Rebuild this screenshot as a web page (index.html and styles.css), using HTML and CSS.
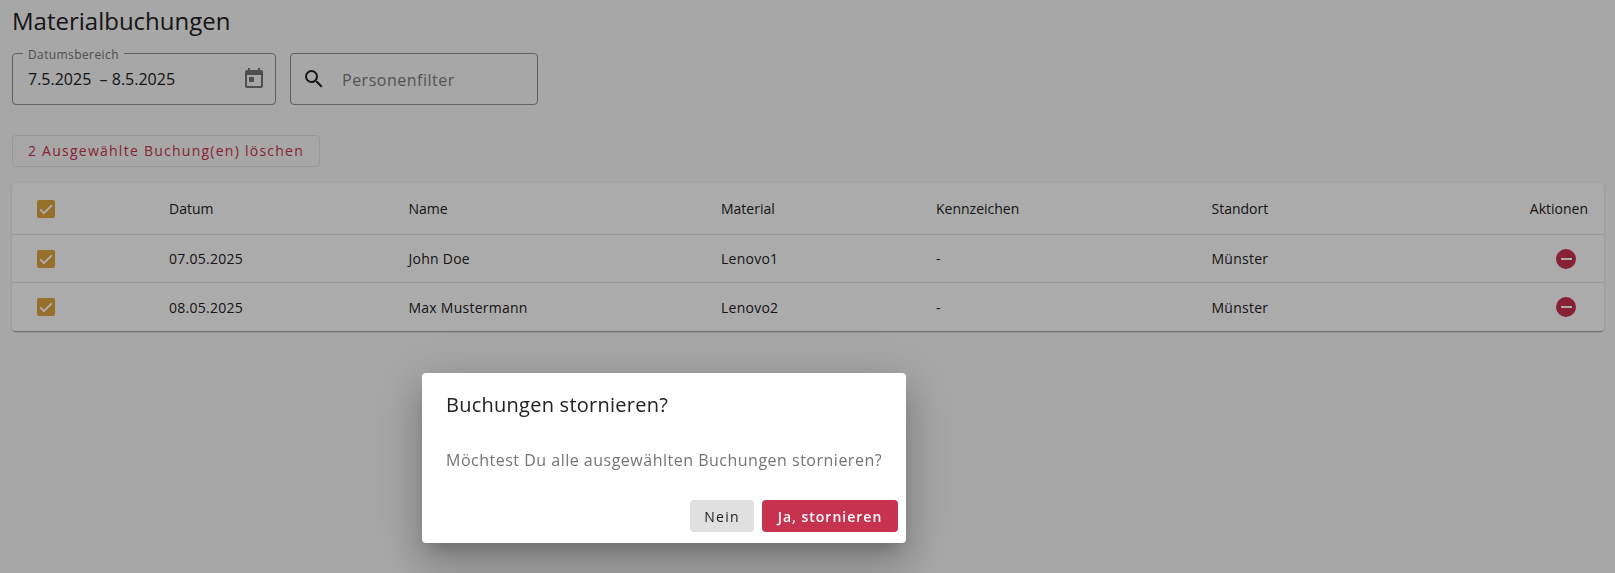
FILE: index.html
```html
<!DOCTYPE html>
<html lang="de">
<head>
<meta charset="utf-8">
<title>Materialbuchungen</title>
<link rel="stylesheet" href="styles.css">
</head>
<body>
<main class="page">
  <h1 class="title">Materialbuchungen</h1>
  <div class="filters">
    <div class="field field-date">
      <span class="field-label">Datumsbereich</span>
      <span class="date-value">7.5.2025 &nbsp;– 8.5.2025</span>
      <svg class="cal-icon" viewBox="0 0 24 24"><path d="M19 3h-1V1h-2v2H8V1H6v2H5c-1.1 0-2 .9-2 2v14c0 1.1.9 2 2 2h14c1.1 0 2-.9 2-2V5c0-1.1-.9-2-2-2zm0 16H5V8h14v11z M7 10h5v5H7z" /></svg>
    </div>
    <div class="field field-search">
      <svg class="search-icon" viewBox="0 0 24 24"><path d="M15.5 14h-.79l-.28-.27A6.471 6.471 0 0 0 16 9.5 6.5 6.5 0 1 0 9.5 16c1.61 0 3.09-.59 4.23-1.57l.27.28v.79l5 4.99L20.49 19l-4.99-5zm-6 0C7.01 14 5 11.99 5 9.5S7.01 5 9.5 5 14 7.01 14 9.5 11.99 14 9.5 14z"/></svg>
      <span class="placeholder">Personenfilter</span>
    </div>
  </div>
  <button class="delete-btn">2 Ausgewählte Buchung(en) löschen</button>
  <div class="card">
    <table class="table">
      <colgroup>
        <col class="c-check"><col class="c-date"><col class="c-name"><col class="c-mat"><col class="c-plate"><col class="c-loc"><col class="c-act">
      </colgroup>
      <thead>
        <tr>
          <th class="cell-check"><span class="check"><svg viewBox="0 0 24 24"><path d="M4.2 12.6l5 5L19.8 7"/></svg></span></th>
          <th>Datum</th><th>Name</th><th>Material</th><th>Kennzeichen</th><th>Standort</th><th class="cell-act">Aktionen</th>
        </tr>
      </thead>
      <tbody>
        <tr>
          <td class="cell-check"><span class="check"><svg viewBox="0 0 24 24"><path d="M4.2 12.6l5 5L19.8 7"/></svg></span></td>
          <td>07.05.2025</td><td>John Doe</td><td>Lenovo1</td><td>-</td><td>Münster</td>
          <td class="cell-act"><span class="remove"></span></td>
        </tr>
        <tr>
          <td class="cell-check"><span class="check"><svg viewBox="0 0 24 24"><path d="M4.2 12.6l5 5L19.8 7"/></svg></span></td>
          <td>08.05.2025</td><td>Max Mustermann</td><td>Lenovo2</td><td>-</td><td>Münster</td>
          <td class="cell-act"><span class="remove"></span></td>
        </tr>
      </tbody>
    </table>
  </div>
</main>
<div class="scrim"></div>
<section class="dialog">
  <h2 class="dialog-title">Buchungen stornieren?</h2>
  <p class="dialog-text">Möchtest Du alle ausgewählten Buchungen stornieren?</p>
  <div class="dialog-actions">
    <button class="btn btn-no">Nein</button>
    <button class="btn btn-yes">Ja, stornieren</button>
  </div>
</section>
</body>
</html>
```
FILE: styles.css
```css
* { box-sizing: border-box; }
html, body { margin: 0; height: 100%; }
body {
  background: #f6f6f6;
  font-family: "Open Sans", "Liberation Sans", sans-serif;
  color: #212121;
  overflow: hidden;
}
.page { padding: 4px 11px 0 12px; }
.title {
  margin: 0 0 15px;
  font-size: 24px;
  font-weight: 400;
  line-height: 34px;
  letter-spacing: 0;
}
.filters { display: flex; gap: 14px; }
.field {
  position: relative;
  display: flex;
  align-items: center;
  height: 52px;
  border: 1px solid #8f8f8f;
  border-radius: 4px;
}
.field-date { width: 264px; padding: 0 9px 0 15px; justify-content: space-between; }
.field-search { width: 248px; padding-left: 11px; }
.field-label {
  position: absolute;
  top: -6px;
  left: 10px;
  padding: 0 5px;
  background: #f6f6f6;
  color: #757575;
  font-size: 12px;
  line-height: 14px;
  letter-spacing: .4px;
}
.date-value { font-size: 16px; letter-spacing: 0; }
.cal-icon { width: 24px; height: 24px; fill: #757575; }
.search-icon { width: 24px; height: 24px; fill: #212121; flex: none; }
.placeholder { margin-top: 2px; margin-left: 16px; font-size: 16px; letter-spacing: .5px; color: #7b7b7b; }
.delete-btn {
  display: block;
  margin: 30px 0 16px;
  width: 308px;
  height: 32px;
  padding: 0 0 2px;
  background: transparent;
  border: 1px solid #e0e0e0;
  border-radius: 4px;
  font: 500 14px "Open Sans", sans-serif;
  letter-spacing: 1.25px;
  color: #c7324f;
}
.card {
  background: #fdfdfd;
  border-radius: 4px;
  box-shadow: 0 2px 1px -1px rgba(0,0,0,.2), 0 1px 1px rgba(0,0,0,.14), 0 1px 3px rgba(0,0,0,.12);
}
.table { width: 100%; border-collapse: separate; border-spacing: 0; table-layout: fixed; font-size: 14px; letter-spacing: .25px; }
.c-check { width: 157px; }
.c-date { width: 239.5px; }
.c-name { width: 312.5px; }
.c-mat { width: 215px; }
.c-plate { width: 275.5px; }
.c-loc { width: 280px; }
th, td { padding: 0; text-align: left; font-weight: 400; vertical-align: middle; border-bottom: 1px solid #e0e0e0; }
th { letter-spacing: 0; height: 52px; }
td { height: 48px; }
tbody tr:last-child td { border-bottom: 0; }
th.cell-check, td.cell-check { padding-left: 25px; }
th.cell-act, td.cell-act { text-align: right; padding-right: 16px; }
.check {
  display: block;
  width: 18px;
  height: 18px;
  background: #dea43e;
  border-radius: 2px;
}
.check svg { display: block; width: 18px; height: 18px; fill: none; stroke: #fff; stroke-width: 2.4; }
.remove {
  display: block;
  position: relative;
  width: 20px;
  height: 20px;
  margin: 0 12px 0 auto;
  border-radius: 50%;
  background: #c7324f;
}
.remove::after {
  content: "";
  position: absolute;
  left: 4.5px;
  right: 4.5px;
  top: 9px;
  height: 2px;
  background: #fff;
}
.scrim { position: fixed; inset: 0; background: rgba(0,0,0,.32); }
.dialog {
  position: absolute;
  left: 422px;
  top: 373px;
  width: 484px;
  height: 170px;
  padding: 0 8px;
  background: #fff;
  border-radius: 4px;
  box-shadow: 0 11px 15px -7px rgba(0,0,0,.2), 0 24px 38px 3px rgba(0,0,0,.14), 0 9px 46px 8px rgba(0,0,0,.12);
}
.dialog-title {
  margin: 0;
  padding: 18px 16px 0;
  font-size: 20px;
  font-weight: 400;
  line-height: 28px;
  letter-spacing: .25px;
}
.dialog-text {
  margin: 0;
  padding: 30px 0 0 16px;
  font-size: 16px;
  line-height: 22px;
  letter-spacing: .5px;
  color: #757575;
  white-space: nowrap;
}
.dialog-actions { display: flex; justify-content: flex-end; gap: 8px; margin-top: 29px; }
.btn {
  height: 32px;
  border: 0;
  border-radius: 4px;
  font: 500 14px "Open Sans", sans-serif;
  letter-spacing: 1.25px;
  padding: 0;
}
.btn-no { width: 64px; background: #e0e0e0; color: #212121; }
.btn-yes { width: 136px; background: #c7324f; color: #fff; font-weight: 600; letter-spacing: 1px; }
```
